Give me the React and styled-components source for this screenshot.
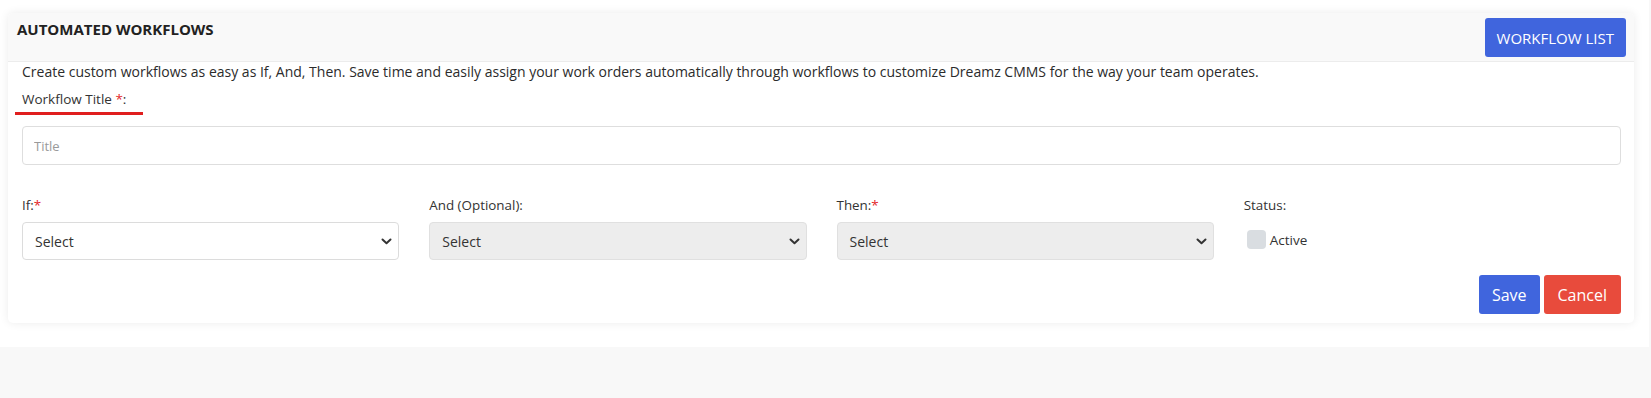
import React from 'react';
import styled, { createGlobalStyle } from 'styled-components';

const GlobalStyle = createGlobalStyle`
  html, body {
    margin: 0;
    padding: 0;
    background: #f8f8f8;
    font-family: "Open Sans", "Liberation Sans", sans-serif;
    color: #333;
  }
  * { box-sizing: border-box; }
`;

const Page = styled.div`
  background: #fff;
  width: 1649px;
  padding: 13px 15px 24px 8px;
`;

const Card = styled.div`
  background: #fff;
  border-radius: 5px;
  box-shadow: 0 0 10px rgba(0, 0, 0, 0.08);
  padding-bottom: 9px;
`;

const Header = styled.div`
  display: flex;
  justify-content: space-between;
  align-items: flex-start;
  background: #f9f9f9;
  border-bottom: 1px solid #ececec;
  padding: 5px 8px 4px 9px;
  border-radius: 5px 5px 0 0;
`;

const Title = styled.h1`
  margin: 0;
  font-size: 15px;
  line-height: 22px;
  font-weight: 700;
  color: #222;
`;

const Button = styled.button`
  border: none;
  border-radius: 3px;
  height: 39px;
  padding: 0 ${(p) => p.$pad || 12}px;
  font-family: inherit;
  font-size: ${(p) => p.$size || 15}px;
  font-weight: 500;
  color: #fff;
  background: ${(p) => (p.$variant === 'danger' ? '#e84b3c' : '#4065dd')};
  cursor: pointer;
`;

const Body = styled.div`
  padding: 0 13px 0 14px;
`;

const Description = styled.p`
  margin: 0;
  font-size: 14px;
  line-height: 20px;
  color: #2b2b2b;
`;

const Label = styled.label`
  display: inline-block;
  font-size: ${(p) => p.$size || 13.4}px;
  line-height: 21px;
  color: #333;
`;

const UnderlinedLabel = styled(Label)`
  margin: 7px 0 0 -7px;
  padding: 0 17px 2px 7px;
  border-bottom: 3px solid #e01e1e;
`;

const Star = styled.span`
  color: #e3262a;
`;

const TextInput = styled.input`
  display: block;
  width: 100%;
  height: 39px;
  margin-top: 11px;
  padding: 0 11px;
  border: 1px solid #dedede;
  border-radius: 4px;
  font-family: inherit;
  font-size: 13px;
  color: #333;
  &::placeholder { color: #9a9a9a; }
`;

const FieldGrid = styled.div`
  display: grid;
  grid-template-columns: repeat(4, 1fr);
  column-gap: 30px;
  margin-top: 30px;
`;

const Field = styled.div`
  display: flex;
  flex-direction: column;
  gap: 6px;
`;

const SelectBox = styled.div`
  display: flex;
  align-items: center;
  justify-content: space-between;
  height: 38px;
  padding: 0 6px 0 12px;
  border: 1px solid ${(p) => (p.$disabled ? '#e0e0e0' : '#dcdcdc')};
  border-radius: 4px;
  background: ${(p) => (p.$disabled ? '#ededed' : '#fff')};
  font-size: 14px;
  color: #333;
`;

const CheckRow = styled.div`
  display: flex;
  align-items: center;
  gap: 4px;
  margin-top: 8px;
  padding-left: 3px;
  font-size: 13.5px;
  color: #333;
`;

const CheckBox = styled.span`
  width: 19px;
  height: 19px;
  border-radius: 4px;
  background: #d9dde1;
`;

const Actions = styled.div`
  display: flex;
  justify-content: flex-end;
  gap: 4px;
  margin-top: 15px;
`;

const Chevron = () => (
  <svg width="11" height="7" viewBox="0 0 11 7" fill="none">
    <path d="M1.5 1.5 L5.5 5.2 L9.5 1.5" stroke="#333" strokeWidth="2" strokeLinecap="round" strokeLinejoin="round" />
  </svg>
);

const Select = ({ disabled }) => (
  <SelectBox $disabled={disabled}>
    <span>Select</span>
    <Chevron />
  </SelectBox>
);

export default function App() {
  return (
    <>
      <GlobalStyle />
      <Page>
        <Card>
          <Header>
            <Title>AUTOMATED WORKFLOWS</Title>
            <Button $pad={12}>WORKFLOW LIST</Button>
          </Header>
          <Body>
            <Description>
              Create custom workflows as easy as If, And, Then. Save time and easily assign your work orders automatically through workflows to customize Dreamz CMMS for the way your team operates.
            </Description>
            <UnderlinedLabel $size={13.5}>
              Workflow Title <Star>*</Star>:
            </UnderlinedLabel>
            <TextInput placeholder="Title" />
            <FieldGrid>
              <Field>
                <Label>If:<Star>*</Star></Label>
                <Select />
              </Field>
              <Field>
                <Label>And (Optional):</Label>
                <Select disabled />
              </Field>
              <Field>
                <Label>Then:<Star>*</Star></Label>
                <Select disabled />
              </Field>
              <Field>
                <Label>Status:</Label>
                <CheckRow>
                  <CheckBox />
                  Active
                </CheckRow>
              </Field>
            </FieldGrid>
            <Actions>
              <Button $size={16} $pad={13}>Save</Button>
              <Button $size={16} $pad={14} $variant="danger">Cancel</Button>
            </Actions>
          </Body>
        </Card>
      </Page>
    </>
  );
}
